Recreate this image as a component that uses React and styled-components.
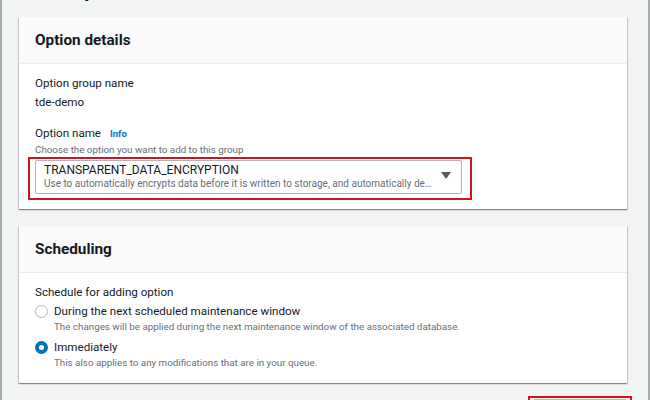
import styled, { createGlobalStyle } from 'styled-components';

const GlobalStyle = createGlobalStyle`
  body {
    margin: 0;
    background: #f2f3f3;
    font-family: Roboto, 'Noto Sans', sans-serif;
    color: #16191f;
  }
`;

const Page = styled.div`
  box-sizing: border-box;
  width: 650px;
  height: 400px;
  overflow: hidden;
  border-left: 2px solid #a9acac;
  border-right: 2px solid #a9acac;
  padding: 0 21px 0 17px;
  background: #f2f3f3;
`;

const PageTitle = styled.h1`
  margin: -22px 0 0 13px;
  height: 22px;
  font-size: 20px;
  line-height: 24px;
  font-weight: 700;
`;

const Card = styled.section`
  background: #fff;
  margin-top: ${(p) => p.$top}px;
  box-shadow: 0 1px 1px 0 rgba(0, 28, 36, 0.3), 1px 1px 1px 0 rgba(0, 28, 36, 0.15),
    -1px 1px 1px 0 rgba(0, 28, 36, 0.15);
`;

const CardHeader = styled.header`
  display: flex;
  align-items: center;
  box-sizing: border-box;
  height: ${(p) => p.$height}px;
  padding: 0 16px;
  background: #fafafa;
  border-bottom: 1px solid #eaeded;
`;

const CardTitle = styled.h2`
  margin: 0;
  font-size: 15.3px;
  font-weight: 700;
`;

const CardBody = styled.div`
  padding: 10px 16px ${(p) => p.$bottom}px;
`;

const Label = styled.div`
  font-size: 11.6px;
  line-height: ${(p) => p.$lh || 19}px;
  display: flex;
  align-items: baseline;
  gap: 9px;
`;

const Value = styled.div`
  font-size: 11.6px;
  line-height: ${(p) => p.$lh || 19}px;
`;

const Field = styled.div`
  margin-top: ${(p) => p.$gap || 0}px;
`;

const Info = styled.span`
  font-size: 9.5px;
  font-weight: 700;
  color: #0073bb;
`;

const Hint = styled.div`
  font-size: 9.8px;
  line-height: 13px;
  color: #687078;
  white-space: nowrap;
`;

const Highlight = styled.div`
  border: 2px solid #d0141e;
  padding: ${(p) => p.$pad};
  margin: ${(p) => p.$margin || 0};
  width: ${(p) => p.$width}px;
  box-sizing: border-box;
`;

const SelectBox = styled.div`
  display: flex;
  align-items: center;
  justify-content: space-between;
  height: 34px;
  box-sizing: border-box;
  border: 1px solid #aab7b8;
  border-radius: 2px;
  padding: 0 10px 0 8px;
`;

const SelectText = styled.div`
  display: flex;
  flex-direction: column;
  min-width: 0;
`;

const SelectValue = styled.div`
  font-size: 12px;
  line-height: 14px;
`;

const SelectDesc = styled.div`
  font-size: 10px;
  line-height: 14px;
  color: #687078;
  white-space: nowrap;
`;

const Caret = styled.span`
  flex: none;
  width: 0;
  height: 0;
  border-left: 5px solid transparent;
  border-right: 5px solid transparent;
  border-top: 7px solid #545b64;
  margin-top: -4px;
`;

const RadioRow = styled.label`
  display: flex;
  gap: 6px;
  margin-top: ${(p) => p.$gap}px;
`;

const RadioDot = styled.span`
  flex: none;
  width: 13px;
  height: 13px;
  box-sizing: border-box;
  border-radius: 50%;
  margin-top: 3px;
  border: ${(p) => (p.$checked ? '4px solid #0073bb' : '1px solid #aab7b8')};
  background: #fff;
`;

const RadioText = styled.div`
  display: flex;
  flex-direction: column;
`;

const Footer = styled.div`
  display: flex;
  justify-content: flex-end;
  margin-top: 13px;
`;

const PrimaryButton = styled.button`
  display: block;
  width: 100%;
  height: 30px;
  border: none;
  border-radius: 2px;
  background: #f2b07f;
  color: #fff;
  font-family: inherit;
  font-weight: 700;
`;

export default function App() {
  return (
    <>
      <GlobalStyle />
      <Page>
        <PageTitle>Add option</PageTitle>
        <Card $top={17}>
          <CardHeader $height={47}>
            <CardTitle>Option details</CardTitle>
          </CardHeader>
          <CardBody $bottom={9}>
            <Field>
              <Label>Option group name</Label>
              <Value>tde-demo</Value>
            </Field>
            <Field $gap={12}>
              <Label $lh={18}>
                Option name <Info>Info</Info>
              </Label>
              <Hint>Choose the option you want to add to this group</Hint>
              <Highlight $pad="1px 8px 4px 5px" $margin="1px 0 0 -7px" $width={444}>
                <SelectBox>
                  <SelectText>
                    <SelectValue>TRANSPARENT_DATA_ENCRYPTION</SelectValue>
                    <SelectDesc>
                      Use to automatically encrypts data before it is written to storage, and automatically de…
                    </SelectDesc>
                  </SelectText>
                  <Caret />
                </SelectBox>
              </Highlight>
            </Field>
          </CardBody>
        </Card>

        <Card $top={17}>
          <CardHeader $height={47}>
            <CardTitle>Scheduling</CardTitle>
          </CardHeader>
          <CardBody $bottom={14}>
            <Label>Schedule for adding option</Label>
            <RadioRow $gap={0}>
              <RadioDot />
              <RadioText>
                <Value $lh={18}>During the next scheduled maintenance window</Value>
                <Hint>The changes will be applied during the next maintenance window of the associated database.</Hint>
              </RadioText>
            </RadioRow>
            <RadioRow $gap={5}>
              <RadioDot $checked />
              <RadioText>
                <Value $lh={18}>Immediately</Value>
                <Hint>This also applies to any modifications that are in your queue.</Hint>
              </RadioText>
            </RadioRow>
          </CardBody>
        </Card>

        <Footer>
          <Highlight $pad="1px 3px" $margin="0 -5px 0 0" $width={104}>
            <PrimaryButton>Add option</PrimaryButton>
          </Highlight>
        </Footer>
      </Page>
    </>
  );
}
